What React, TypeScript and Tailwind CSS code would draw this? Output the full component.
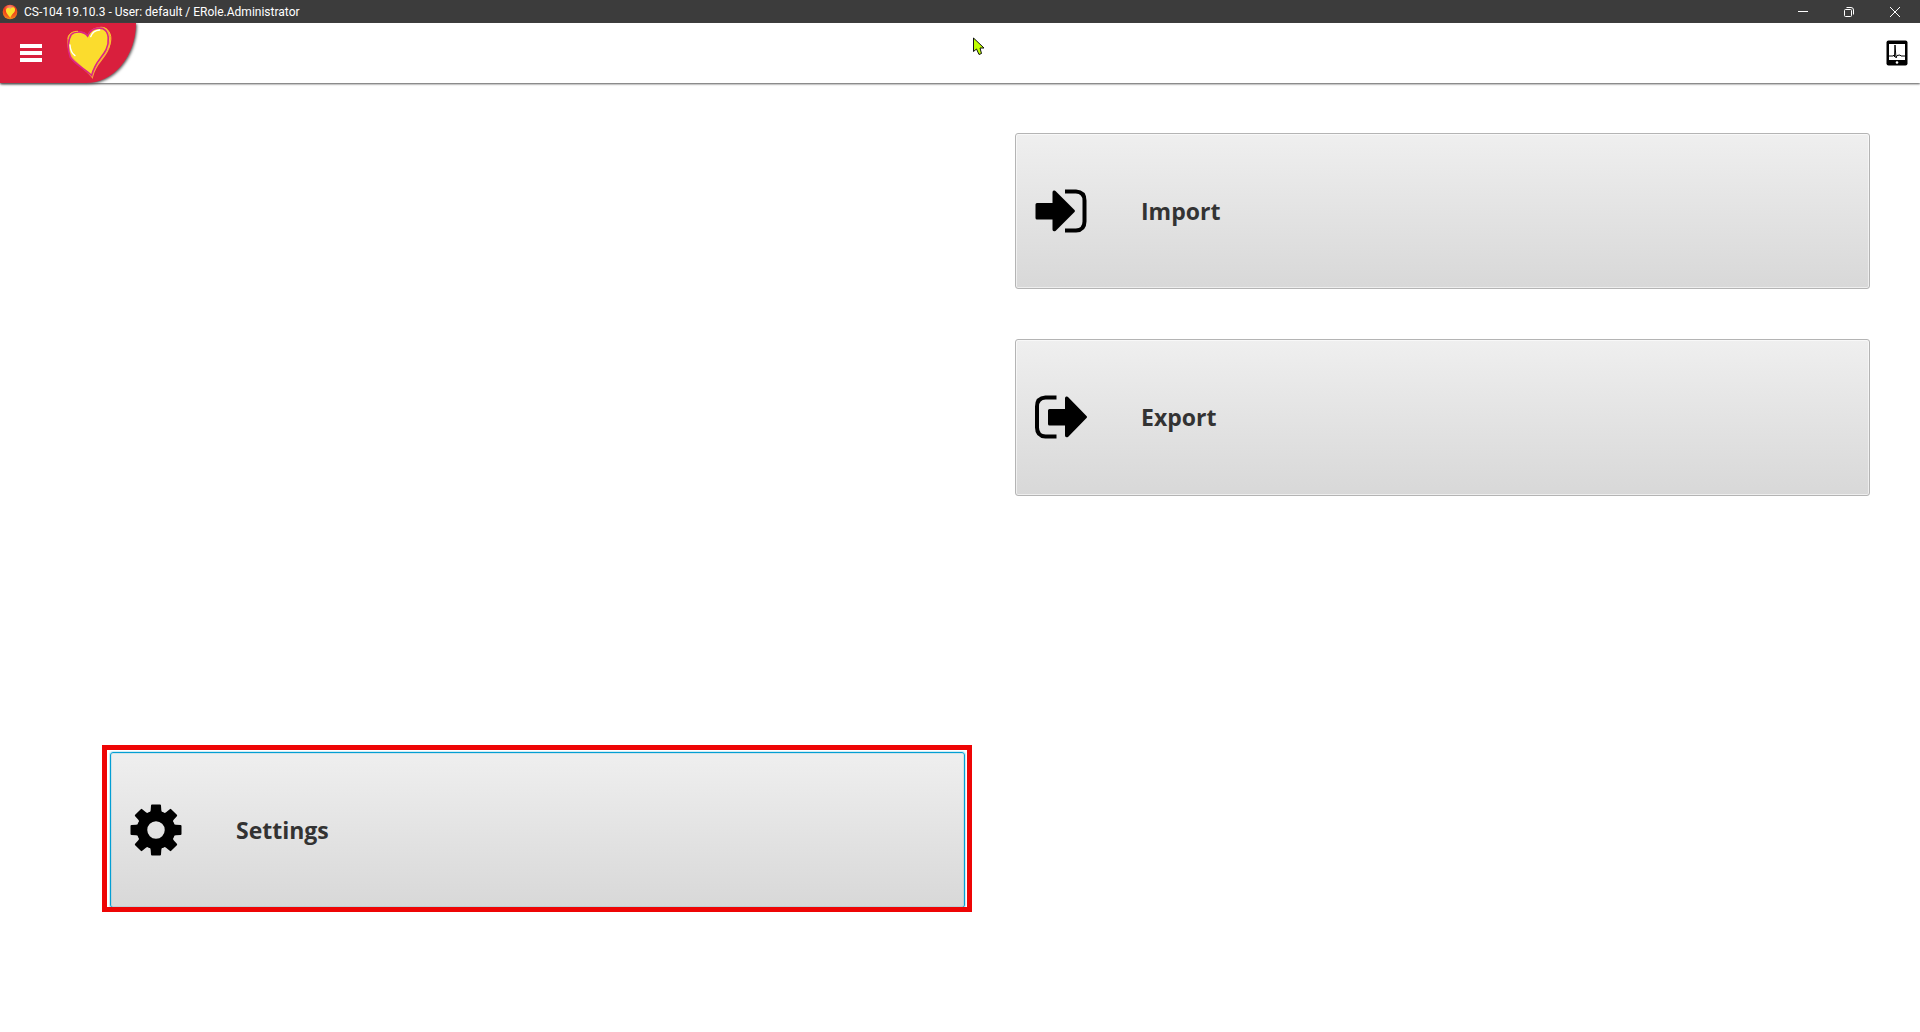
import { ReactNode } from "react";

type TileProps = {
  label: string;
  icon: ReactNode;
  className: string;
};

const HEART =
  "M277 229 C262 208 238 196 217 171 C204 154 200 118 209 103 C219 88 252 90 263 106 C269 86 292 77 311 80 C334 87 335 124 322 151 C309 178 285 189 277 229 Z";

const AppIcon = () => (
  <svg className="size-4" viewBox="0 0 48 48" aria-hidden="true">
    <defs>
      <radialGradient id="ball" cx="50%" cy="25%" r="75%">
        <stop offset="0" stopColor="#f7a08a" />
        <stop offset="0.5" stopColor="#ee3a1c" />
        <stop offset="1" stopColor="#f58a1c" />
      </radialGradient>
    </defs>
    <circle cx="24" cy="24" r="22" fill="url(#ball)" />
    <path d="M25 42C21 34 10 28 12 17c2-7 10-6 13-1 2-7 12-9 14-1 2 11-11 15-14 27Z" fill="#fbe02c" />
  </svg>
);

const Logo = () => (
  <svg className="h-[54px] w-[46px]" viewBox="198 75 138 162" fill="none" aria-hidden="true">
    <path d={HEART} fill="#fbdc2d" stroke="#f9a83a" strokeWidth="4" />
    <path
      d="M275 223C255 204 225 190 211 169C201 145 204 116 214 100C226 89 252 90 263 105C273 84 292 78 309 83C328 91 329 123 318 147C305 172 285 182 275 223Z"
      stroke="#dc2585"
      strokeWidth="5"
    />
    <path d="M204 115C202 99 219 90 234 91M313 81C337 92 336 118 326 141" stroke="#fbc52d" strokeWidth="3" />
    <path d="M272 107C276 95 286 88 299 87M210 132C211 147 216 158 225 164" stroke="#fff" strokeWidth="4" strokeLinecap="round" />
  </svg>
);

const ImportIcon = () => (
  <svg className="h-[44px] w-[52px]" viewBox="0 0 52 44" aria-hidden="true">
    <path
      d="M2 14H17.500V3.500Q17.500 1 19.500 1.500L20.500 2L39.500 21Q40.500 22 39.500 23L20.500 42Q17.500 43 17.500 40.500V30.500H2Q.500 30.500 .500 29V15.500Q.500 14 2 14Z"
    />
    <path d="M30 2.500H41Q49.500 3 49.500 11.500V32.500Q49.500 41 41 41.500H30" fill="none" stroke="#000" strokeWidth="4" />
  </svg>
);

const ExportIcon = () => (
  <svg className="h-[44px] w-[52px]" viewBox="0 0 52 44" aria-hidden="true">
    <path
      d="M14.500 14H30V3.500Q30 1 32 1.500L33 2L51.500 21Q52.500 22 51.500 23L33 42Q30 43 30 40.500V30.500H14.500Q13 30.500 13 29V15.500Q13 14 14.500 14Z"
    />
    <path d="M21.500 2.500H10.500Q2 3 2 11.500V32.500Q2 41 10.500 41.500H21.500" fill="none" stroke="#000" strokeWidth="4" />
  </svg>
);

const TEETH = [0, 45, 90, 135, 180, 225, 270, 315];

const GearIcon = () => (
  <svg className="size-[52px]" viewBox="-26 -26 52 52" aria-hidden="true">
    <circle r="14" fill="none" stroke="#000" strokeWidth="10.500" />
    {TEETH.map((angle) => (
      <path
        key={angle}
        d="M-7 -16Q-5.500 -17 -5.300 -20L-5 -24.500Q-5 -25.500 -4 -25.500H4Q5 -25.500 5 -24.500L5.300 -20Q5.500 -17 7 -16Z"
        transform={`rotate(${angle})`}
      />
    ))}
  </svg>
);

const TabletIcon = () => (
  <svg className="h-[26px] w-[22px]" viewBox="0 0 22 26" aria-hidden="true">
    <rect x="0.500" y="0.500" width="21" height="25" rx="2" />
    <path d="M3 4H19V20H3Z" fill="#fff" />
    <path d="M3 16H7L8 15L8.500 17L9 5L10 18L11 15.500L14 15L15 16H19" fill="none" stroke="#000" strokeWidth="1" />
    <circle cx="11" cy="22.500" r="1.300" fill="#fff" />
  </svg>
);

const Tile = ({ label, icon, className }: TileProps) => (
  <button
    type="button"
    className={`flex size-full items-center rounded-[3px] border bg-linear-to-b from-[#efefef] to-[#d8d8d8] pl-[19px] text-left text-[23px] font-bold text-[#333333] ${className}`}
  >
    <span className="w-[106px]">{icon}</span>
    {label}
  </button>
);

const TitleBar = () => (
  <div className="flex h-[23px] items-center bg-[#3c3c3c] pr-0.5 pl-[2px] text-white">
    <AppIcon />
    <h1 className="ml-1.5 flex-1 font-[Roboto,sans-serif] text-[12px] leading-4">
      CS-104 19.10.3 - User: default / ERole.Administrator
    </h1>
    <button type="button" aria-label="Minimize" className="flex h-full w-[46px] items-center justify-center">
      <svg className="size-[10px]" viewBox="0 0 10 10" stroke="#fff">
        <path d="M0 4.500H10" />
      </svg>
    </button>
    <button type="button" aria-label="Restore" className="flex h-full w-[46px] items-center justify-center">
      <svg className="size-[10px]" viewBox="0 0 10 10" fill="none" stroke="#fff">
        <rect x="0.500" y="2.500" width="7" height="7" rx="1" />
        <path d="M2.500 .500H7Q9.500 .500 9.500 3V7.500" />
      </svg>
    </button>
    <button type="button" aria-label="Close" className="flex h-full w-[46px] items-center justify-center">
      <svg className="size-[10px]" viewBox="0 0 10 10" stroke="#fff">
        <path d="M0 0L10 10M10 0L0 10" />
      </svg>
    </button>
  </div>
);

const App = () => {
  return (
    <div className="relative flex min-h-screen flex-col bg-white font-['Open_Sans','Noto_Sans',sans-serif]">
      <TitleBar />

      <header className="flex h-[60px] items-center justify-between bg-white pr-3 shadow-[0_1px_2px_#555]">
        <div className="flex h-full w-[136px] items-center rounded-br-[50px_60px] bg-[#d91f3d] pl-5 shadow-[1px_1px_3px_#555]">
          <button type="button" aria-label="Menu" className="mr-6">
            <svg className="h-[18px] w-[22px]" viewBox="0 0 22 18" fill="#fff">
              <path d="M0 0H22V4H0ZM0 7H22V11H0ZM0 14H22V18H0Z" />
            </svg>
          </button>
          <Logo />
        </div>
        <button type="button" aria-label="Device">
          <TabletIcon />
        </button>
      </header>

      <main className="grid flex-1 grid-cols-2 grid-rows-4 gap-[50px] pt-[50px] pr-[50px] pb-[124px] pl-[110px]">
        <div className="col-start-2 row-start-1">
          <Tile label="Import" icon={<ImportIcon />} className="border-[#b4b4b4] inset-shadow-[0_0_0_1px_#ffffff90]" />
        </div>
        <div className="col-start-2 row-start-2">
          <Tile label="Export" icon={<ExportIcon />} className="border-[#b4b4b4] inset-shadow-[0_0_0_1px_#ffffff90]" />
        </div>
        <div className="relative col-start-1 row-start-4">
          <Tile
            label="Settings"
            icon={<GearIcon />}
            className="border-[#039ed3] shadow-[0_0_0_1px_#039ed333] inset-shadow-[0_0_0_1px_#039ed322]"
          />
          <div className="pointer-events-none absolute -top-[7px] -right-[7px] -bottom-1 -left-2 border-5 border-[#ee0505]" />
        </div>
      </main>

      {/* mouse pointer */}
      <svg className="absolute top-[37px] left-[973px] h-[19px] w-[13px]" viewBox="0 0 13 19" aria-hidden="true">
        <path d="M.500 1V14.500L3.500 12L6 17.500L8.500 16.500L7 11H11Z" fill="#c0ff00" stroke="#111" />
      </svg>
    </div>
  );
};

export default App;
